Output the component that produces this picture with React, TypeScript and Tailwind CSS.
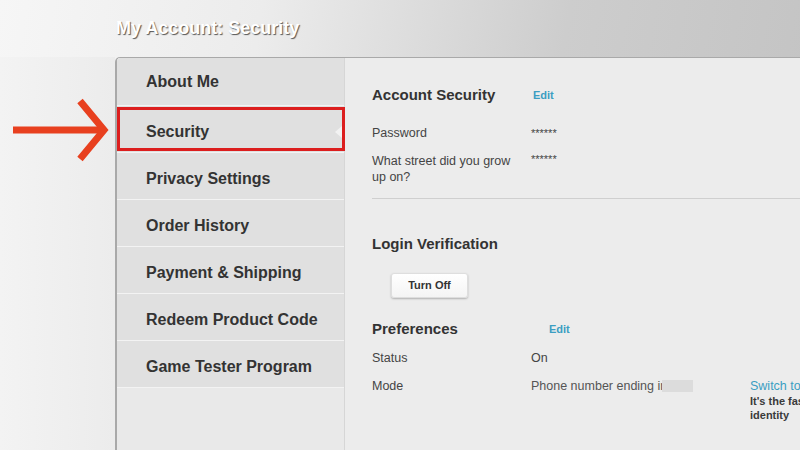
import React from "react";

const menu = [
  "About Me",
  "Security",
  "Privacy Settings",
  "Order History",
  "Payment & Shipping",
  "Redeem Product Code",
  "Game Tester Program",
];

const App = () => {
  return (
    <div className="w-[800px] h-[450px] overflow-hidden flex flex-col font-['Liberation_Sans',Arial,sans-serif] bg-[linear-gradient(100deg,#f6f6f6_0%,#ececec_30%,#cdcdcd_65%,#c2c2c2_100%)]">
      {/* Header */}
      <div className="h-[57px] shrink-0 pl-[116px] pt-[17px]">
        <h1 className="text-[18px] leading-[22px] font-bold text-white [text-shadow:1px_1px_1px_#555]">
          My Account: Security
        </h1>
      </div>

      <div className="flex flex-1">
        {/* Left gutter with arrow */}
        <div className="w-[115px] shrink-0 bg-[linear-gradient(90deg,#f3f3f3,#ececec)]">
          <svg width="115" height="140" viewBox="0 57 115 140">
            <line x1="13" y1="130" x2="101" y2="130" stroke="#e8401f" strokeWidth="7" />
            <polyline
              points="80,101 104,130 80,159"
              fill="none"
              stroke="#e8401f"
              strokeWidth="7"
            />
          </svg>
        </div>

        {/* Panel */}
        <div className="flex flex-1 rounded-tl-[5px] border-l-2 border-t border-[#a9a9a9] overflow-hidden">
          {/* Sidebar */}
          <div className="w-[228px] shrink-0 flex flex-col bg-[#e9e9e9] border-r border-[#d6d6d6]">
            {menu.map((item, i) => (
              <div
                key={item}
                className={`relative flex items-center pl-[29px] bg-[#e0e0e0] border-b border-[#f3f3f3] ${
                  i === 0 ? "h-[48px]" : "h-[47px] pt-[5px]"
                }`}
              >
                <span className="text-[16px] font-bold text-[#333]">{item}</span>
                {item === "Security" && (
                  <>
                    <span className="absolute left-0 right-[-1px] top-[1px] bottom-[1px] border-[3px] border-[#dc1e1e]" />
                    <span className="absolute right-[2px] top-[20px] w-0 h-0 border-y-[6px] border-y-transparent border-r-[7px] border-r-[#f2f2f2]" />
                  </>
                )}
              </div>
            ))}
          </div>

          {/* Content */}
          <div className="flex-1 bg-[#ececec] pl-[27px] pt-[28px] text-[#444]">
            <div className="flex items-center h-[18px]">
              <h2 className="w-[161px] text-[15px] font-bold text-[#333]">Account Security</h2>
              <span className="text-[11px] font-bold text-[#3b9ec2]">Edit</span>
            </div>

            <div className="flex mt-[21px] text-[12.5px] leading-[16px]">
              <span className="w-[159px]">Password</span>
              <span className="text-[11px]">******</span>
            </div>
            <div className="flex mt-[12px] text-[12.5px] leading-[16px]">
              <span className="w-[159px] pr-[10px]">What street did you grow up on?</span>
              <span className="text-[11px] leading-[12px]">******</span>
            </div>

            <div className="mt-[13px] border-t border-[#cfcfcf]" />

            <h2 className="mt-[36px] h-[18px] text-[15px] leading-[18px] font-bold text-[#333]">
              Login Verification
            </h2>

            <button className="mt-[20px] ml-[19px] w-[77px] h-[25px] rounded-[3px] bg-[linear-gradient(#ffffff,#f4f4f4)] border border-[#dedede] shadow-[0_1px_2px_rgba(0,0,0,0.25)] text-[11px] font-bold text-[#333]">
              Turn Off
            </button>

            <div className="flex items-center h-[18px] mt-[22px]">
              <h2 className="w-[177px] text-[15px] font-bold text-[#333]">Preferences</h2>
              <span className="text-[11px] font-bold text-[#3b9ec2]">Edit</span>
            </div>

            <div className="flex mt-[12px] text-[12.5px] leading-[16px]">
              <span className="w-[159px]">Status</span>
              <span>On</span>
            </div>
            <div className="flex items-start mt-[12px] text-[12.5px] leading-[16px]">
              <span className="w-[159px]">Mode</span>
              <div className="w-[219px] h-[16px] flex items-center">
                <span className="text-[#555]">Phone number ending in</span>
                <span className="ml-[-5px] w-[31px] h-[12px] bg-[#dcdcdc]" />
              </div>
              <div className="flex flex-col whitespace-nowrap">
                <span className="text-[#3b9ec2]">Switch to</span>
                <span className="text-[11px] leading-[14px] font-bold text-[#3a3a3a]">
                  It's the fastest way to verify your
                </span>
                <span className="text-[11px] leading-[14px] font-bold text-[#3a3a3a]">identity</span>
              </div>
            </div>
          </div>
        </div>
      </div>
    </div>
  );
};

export default App;
